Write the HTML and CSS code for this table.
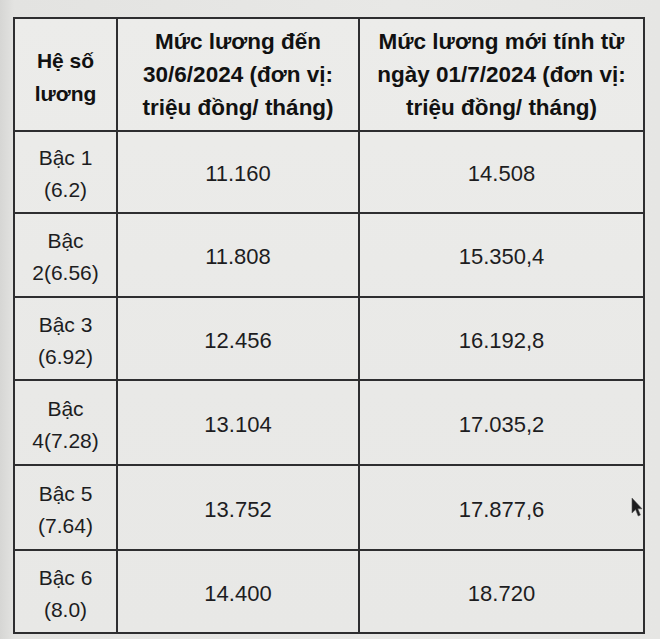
FILE: index.html
```html
<!DOCTYPE html>
<html lang="vi">
<head>
<meta charset="utf-8">
<title>Bảng lương</title>
<link rel="stylesheet" href="styles.css">
</head>
<body>
<div class="screen">
  <table class="salary">
    <colgroup>
      <col class="c1">
      <col class="c2">
      <col class="c3">
    </colgroup>
    <thead>
      <tr class="head">
        <th class="label">Hệ số<br>lương</th>
        <th>Mức lương đến<br>30/6/2024 (đơn vị:<br>triệu đồng/ tháng)</th>
        <th>Mức lương mới tính từ<br>ngày 01/7/2024 (đơn vị:<br>triệu đồng/ tháng)</th>
      </tr>
    </thead>
    <tbody>
      <tr class="r1"><td class="label">Bậc 1<br>(6.2)</td><td>11.160</td><td>14.508</td></tr>
      <tr class="r2"><td class="label">Bậc<br>2(6.56)</td><td>11.808</td><td>15.350,4</td></tr>
      <tr class="r3"><td class="label">Bậc 3<br>(6.92)</td><td>12.456</td><td>16.192,8</td></tr>
      <tr class="r4"><td class="label">Bậc<br>4(7.28)</td><td>13.104</td><td>17.035,2</td></tr>
      <tr class="r5"><td class="label">Bậc 5<br>(7.64)</td><td>13.752</td><td>17.877,6</td></tr>
      <tr class="r6"><td class="label">Bậc 6<br>(8.0)</td><td>14.400</td><td>18.720</td></tr>
    </tbody>
  </table>
  <svg class="cursor" width="12" height="21" viewBox="0 0 12 21" aria-hidden="true">
    <path d="M1 1 L1 16 L4.6 12.6 L7.2 19 L9.4 18 L6.8 11.8 L11 11.8 Z" fill="#1c1c1e" stroke="#555" stroke-width="0.6"/>
  </svg>
</div>
</body>
</html>
```
FILE: styles.css
```css
html, body {
  margin: 0;
  padding: 0;
}
body {
  width: 660px;
  height: 639px;
  overflow: hidden;
  background: linear-gradient(90deg, #d6d6d4 0px, #e3e3e1 14px, #e8e8e6 60%, #e6e6e4 100%);
  font-family: "Liberation Sans", Arial, sans-serif;
}
.screen {
  position: relative;
  padding: 17px 0 0 13px;
}
.salary {
  border-collapse: collapse;
  table-layout: fixed;
  width: 630px;
  background: linear-gradient(180deg, #ececea 0%, #e9e9e7 60%, #e8e8e6 100%);
  color: #1d1d1f;
}
.c1 { width: 103px; }
.c2 { width: 242px; }
.c3 { width: 285px; }
.salary th,
.salary td {
  border: 2px solid #2e2e30;
  text-align: center;
  vertical-align: middle;
  padding: 0;
  font-size: 22px;
  line-height: 32px;
}
.salary th {
  font-weight: bold;
  color: #111;
  font-size: 22.5px;
  line-height: 33px;
}
.salary td {
  padding-top: 4px;
}
.salary th.label {
  font-size: 21px;
  padding-top: 5px;
}
.salary td.label {
  font-size: 21px;
}
.head { height: 113px; }
.r1 { height: 82px; }
.r2 { height: 84px; }
.r3 { height: 83px; }
.r4 { height: 85px; }
.r5 { height: 85px; }
.r6 { height: 83px; }
.cursor {
  position: absolute;
  left: 631px;
  top: 497px;
}
```
